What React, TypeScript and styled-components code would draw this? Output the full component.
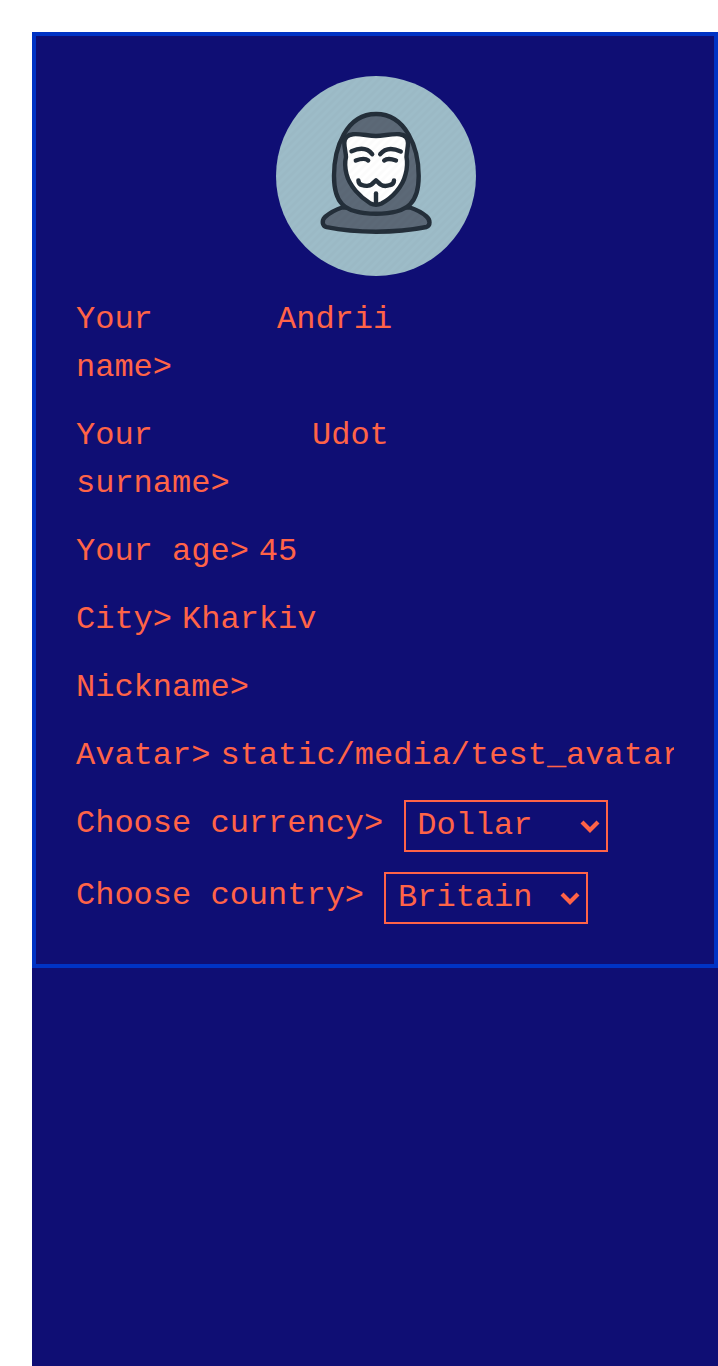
import React from "react";
import styled, { createGlobalStyle } from "styled-components";

const GlobalStyle = createGlobalStyle`
  * { box-sizing: border-box; }
  body { margin: 0; background: #fff; overflow: hidden; }
`;

const Page = styled.main`
  height: 1366px;
  padding: 32px 0 0 32px;
  overflow: hidden;
`;

const Screen = styled.div`
  height: 100%;
  background: #0f0e74;
  color: #ff6347;
  font: 32px/48px "Liberation Mono", monospace;
`;

const Card = styled.form`
  display: flex;
  flex-direction: column;
  gap: 20px;
  padding: 40px;
  border: 4px solid #0033c4;
`;

const Avatar = styled.svg`
  display: block;
  width: 200px;
  height: 200px;
  margin-left: 200px;
  border-radius: 50%;
`;

const Row = styled.div`
  display: flex;
  align-items: flex-start;
`;

const Label = styled.label<{ $width?: number }>`
  flex: none;
  width: ${(p) => (p.$width ? `${p.$width}px` : "auto")};
`;

const Value = styled.span`
  flex: 1;
  min-width: 0;
  margin-left: 10px;
  overflow: hidden;
  white-space: nowrap;
`;

const SelectBox = styled.div`
  position: relative;
  width: 204px;
  height: 52px;
  margin-left: 20.4px;
`;

const Select = styled.select`
  appearance: none;
  display: block;
  width: 100%;
  height: 100%;
  margin: 0;
  padding: 0 11.6px;
  border: 2px solid #ff6347;
  border-radius: 0;
  background: transparent;
  color: inherit;
  font: inherit;
`;

const Chevron = styled.svg`
  position: absolute;
  top: 20px;
  right: 8px;
  width: 20px;
  height: 14px;
  pointer-events: none;
`;

type FieldProps = { label: string; value?: string; labelWidth?: number };

const Field = ({ label, value, labelWidth }: FieldProps) => (
  <Row>
    <Label $width={labelWidth}>{label}&gt;</Label>
    <Value>{value}</Value>
  </Row>
);

const Choice = ({ label, options }: { label: string; options: string[] }) => (
  <Row>
    <Label>{label}&gt;</Label>
    <SelectBox>
      <Select aria-label={label}>
        {options.map((o) => (
          <option key={o}>{o}</option>
        ))}
      </Select>
      <Chevron viewBox="0 0 20 14" fill="none" stroke="#ff6347" strokeWidth="4.2">
        <path d="M2 2 10 10 18 2" />
      </Chevron>
    </SelectBox>
  </Row>
);

const MaskAvatar = () => (
  <Avatar viewBox="0 0 200 200">
    <defs>
      <pattern id="stripes" width="5.66" height="5.66" patternUnits="userSpaceOnUse" patternTransform="rotate(45)">
        <rect width="2.83" height="5.66" fill="#000" opacity="0.016" />
      </pattern>
    </defs>
    <rect width="200" height="200" fill="#9dbcc8" />
    <g stroke="#242f3a" strokeWidth="4.4" strokeLinecap="round" strokeLinejoin="round" fill="none">
      <path
        fill="#5c6977"
        d="M66 131.5C60 133.5 53 137.500 49 141C45.500 144.500 46 150 50.700 151.200C67 154.500 84 155.700 100 155.700C117 155.700 134 154.300 150.500 151C154.500 149.500 154.500 144 150.500 140.500C146 136.500 140 133.500 134 131.500Z"
      />
      <path
        fill="#5c6977"
        d="M100 38C70 38 58 72 58 100C58 125 66 137.700 100 137.700C134 137.700 142.700 125 142.700 100C142.700 72 130 38 100 38Z"
      />
      <path
        fill="#fff"
        d="M77 58.200C85 57.500 92 60 100 60C108 60 115 57.500 123.500 58.200C129 58.700 132 62 132 67C132 72 130.500 77 130.500 81C131.500 86 131 93 129.500 98.500C126.500 111 116 122 105.500 127.500C102 129 98 129 94.500 127.500C84 121 73.500 110 70.500 98C69 92 68.500 87 70 81C70 77 68.300 72 68.300 67C68.300 62 71.500 58.700 77 58.200Z"
      />
      <path d="M75.500 75.300C83 72 91 71.500 96.200 78.200M104.200 78.200C109.500 71.500 117 72 124.800 75.500" />
      <path d="M79.800 84.500C84.500 82.800 89.500 82.300 92.200 84.400M108.200 84.400C111 82.300 115.500 82.800 120 84.500" />
      <path d="M82.400 104.400C82.500 107.500 83.500 108.600 86 109C89 110.300 93.500 110.200 95.500 108.500L100 104.400L104.500 108.500C107 110.200 111 110.200 114 109C116.800 108.500 117.900 107.300 118 104.400" />
      <path d="M100 117.500V128" />
    </g>
    <rect width="200" height="200" fill="url(#stripes)" />
  </Avatar>
);

export default function App() {
  return (
    <Page>
      <GlobalStyle />
      <Screen>
        <Card>
          <MaskAvatar />
          <Field label="Your name" value="Andrii" labelWidth={191} />
          <Field label="Your surname" value="Udot" labelWidth={226} />
          <Field label="Your age" value="45" />
          <Field label="City" value="Kharkiv" />
          <Field label="Nickname" />
          <Field label="Avatar" value="static/media/test_avatar.png" />
          <Choice label="Choose currency" options={["Dollar", "Euro"]} />
          <Choice label="Choose country" options={["Britain", "Ukraine"]} />
        </Card>
      </Screen>
    </Page>
  );
}
